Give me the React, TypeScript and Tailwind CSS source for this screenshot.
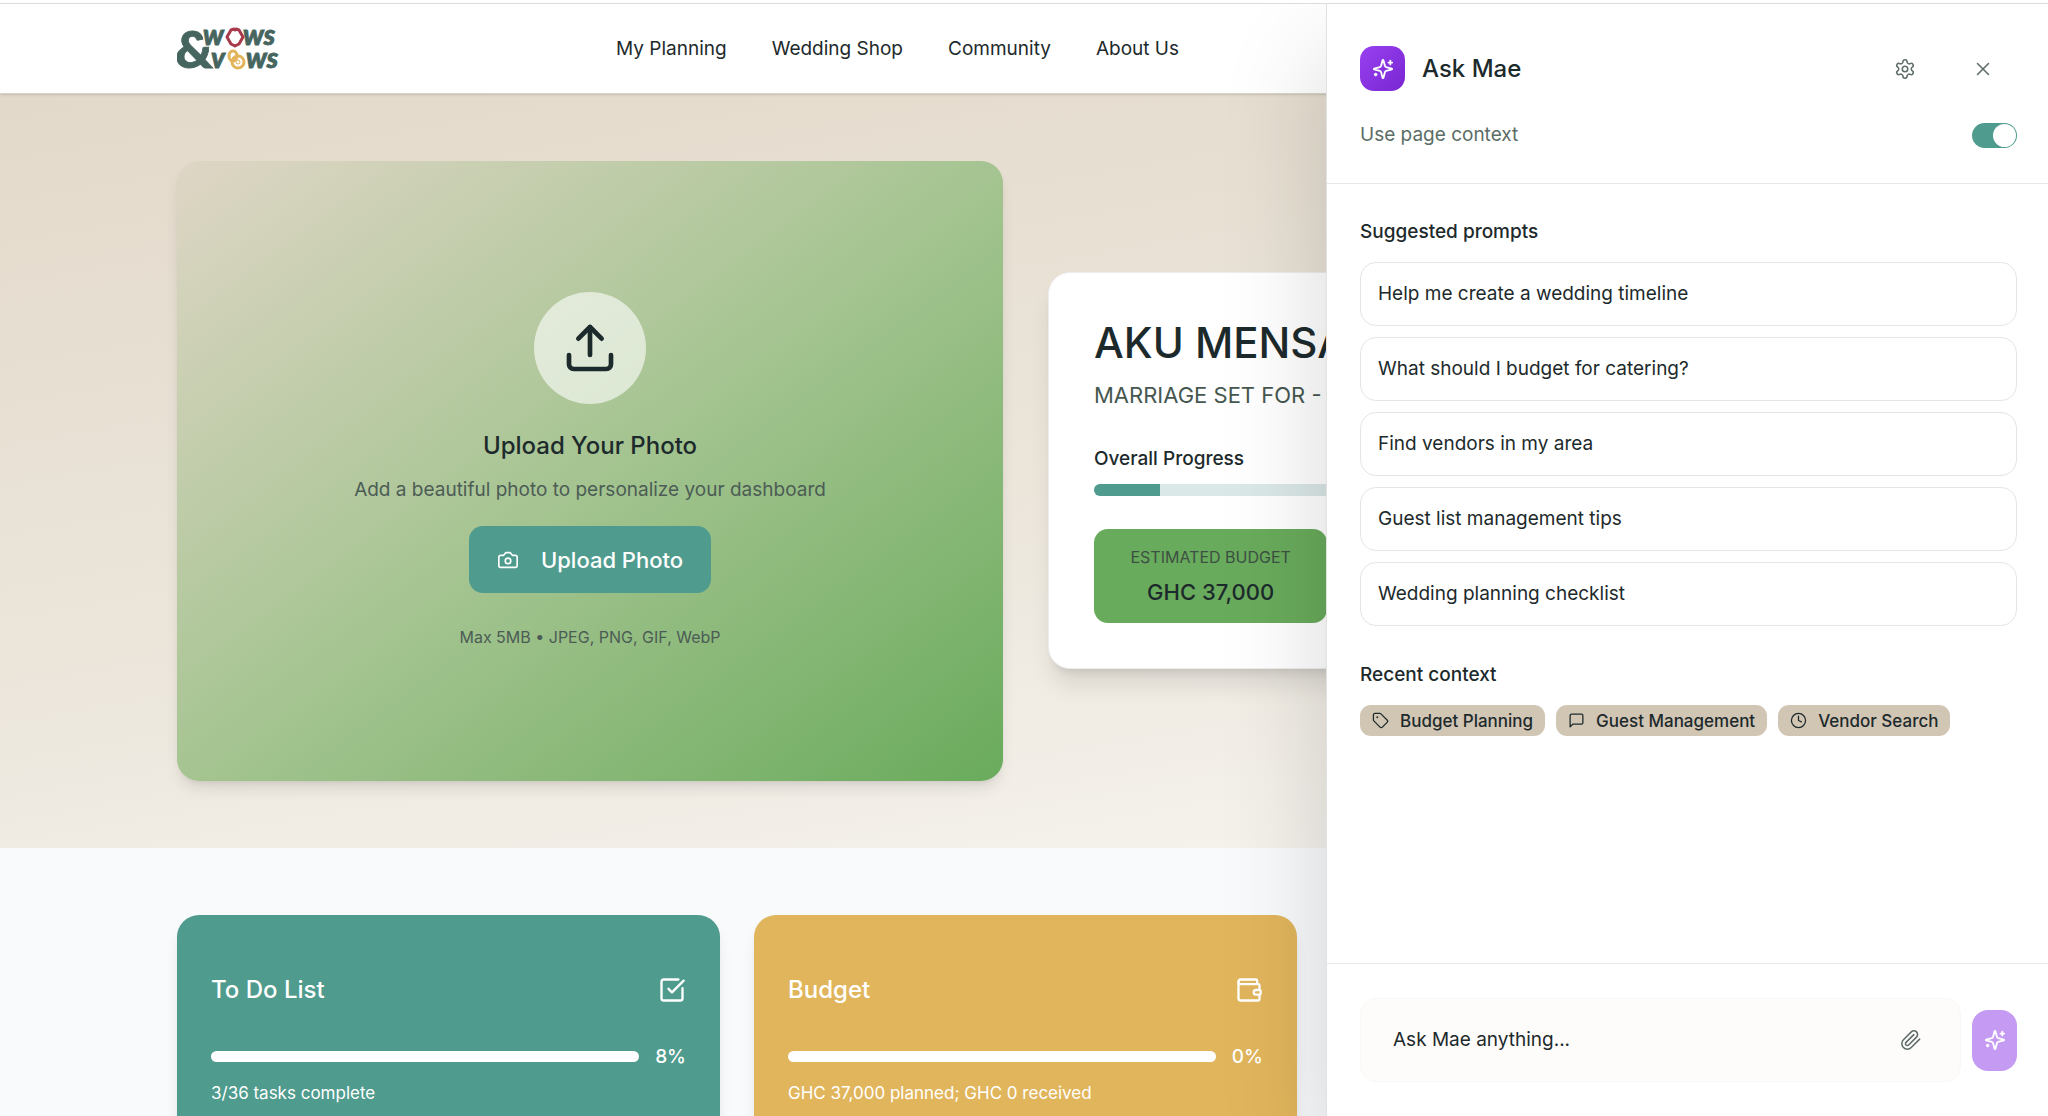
import React, { useState } from 'react';
import { Clock, Tag, Upload, Wallet, X } from 'lucide-react';

const navLinks = ['My Planning', 'Wedding Shop', 'Community', 'About Us'];

const prompts = [
  'Help me create a wedding timeline',
  'What should I budget for catering?',
  'Find vendors in my area',
  'Guest list management tips',
  'Wedding planning checklist',
];

interface IconProps {
  size: number;
  strokeWidth?: number;
}

function Icon({ size, strokeWidth = 2, children }: IconProps & { children: React.ReactNode }) {
  return (
    <svg
      width={size}
      height={size}
      viewBox="0 0 24 24"
      fill="none"
      stroke="currentColor"
      strokeWidth={strokeWidth}
      strokeLinecap="round"
      strokeLinejoin="round"
      aria-hidden="true"
    >
      {children}
    </svg>
  );
}

function SparklesIcon(props: IconProps) {
  return (
    <Icon {...props}>
      <path d="M9.937 15.5A2 2 0 0 0 8.5 14.063l-6.135-1.582a.5.5 0 0 1 0-.962L8.5 9.936A2 2 0 0 0 9.937 8.5l1.582-6.135a.5.5 0 0 1 .963 0L14.063 8.5A2 2 0 0 0 15.5 9.937l6.135 1.581a.5.5 0 0 1 0 .964L15.5 14.063a2 2 0 0 0-1.437 1.437l-1.582 6.135a.5.5 0 0 1-.963 0z" />
      <path d="M20 3v4" />
      <path d="M22 5h-4" />
      <path d="M4 17v2" />
      <path d="M5 18H3" />
    </Icon>
  );
}

function SettingsIcon(props: IconProps) {
  return (
    <Icon {...props}>
      <path d="M12.22 2h-.44a2 2 0 0 0-2 2v.18a2 2 0 0 1-1 1.73l-.43.25a2 2 0 0 1-2 0l-.15-.08a2 2 0 0 0-2.73.73l-.22.38a2 2 0 0 0 .73 2.73l.15.1a2 2 0 0 1 1 1.72v.51a2 2 0 0 1-1 1.74l-.15.09a2 2 0 0 0-.73 2.73l.22.38a2 2 0 0 0 2.73.73l.15-.08a2 2 0 0 1 2 0l.43.25a2 2 0 0 1 1 1.73V20a2 2 0 0 0 2 2h.44a2 2 0 0 0 2-2v-.18a2 2 0 0 1 1-1.73l.43-.25a2 2 0 0 1 2 0l.15.08a2 2 0 0 0 2.73-.73l.22-.39a2 2 0 0 0-.73-2.73l-.15-.08a2 2 0 0 1-1-1.74v-.5a2 2 0 0 1 1-1.74l.15-.09a2 2 0 0 0 .73-2.73l-.22-.38a2 2 0 0 0-2.73-.73l-.15.08a2 2 0 0 1-2 0l-.43-.25a2 2 0 0 1-1-1.73V4a2 2 0 0 0-2-2z" />
      <circle cx="12" cy="12" r="3" />
    </Icon>
  );
}

function CameraIcon(props: IconProps) {
  return (
    <Icon {...props}>
      <path d="M14.5 4h-5L7 7H4a2 2 0 0 0-2 2v9a2 2 0 0 0 2 2h16a2 2 0 0 0 2-2V9a2 2 0 0 0-2-2h-3l-2.5-3z" />
      <circle cx="12" cy="13" r="3" />
    </Icon>
  );
}

function MessageIcon(props: IconProps) {
  return (
    <Icon {...props}>
      <path d="M21 15a2 2 0 0 1-2 2H7l-4 4V5a2 2 0 0 1 2-2h14a2 2 0 0 1 2 2z" />
    </Icon>
  );
}

function PaperclipIcon(props: IconProps) {
  return (
    <Icon {...props}>
      <path d="m21.44 11.05-9.19 9.19a6 6 0 0 1-8.49-8.49l8.57-8.57A4 4 0 1 1 18 8.84l-8.59 8.57a2 2 0 0 1-2.83-2.83l8.49-8.48" />
    </Icon>
  );
}

function TaskIcon(props: IconProps) {
  return (
    <Icon {...props}>
      <path d="M21 10.5V19a2 2 0 0 1-2 2H5a2 2 0 0 1-2-2V5a2 2 0 0 1 2-2h12.5" />
      <path d="m9 11 3 3L22 4" />
    </Icon>
  );
}

const recentContext = [
  { label: 'Budget Planning', icon: Tag },
  { label: 'Guest Management', icon: MessageIcon },
  { label: 'Vendor Search', icon: Clock },
];

function Logo() {
  return (
    <a href="#" aria-label="Wows & Vows" className="block">
      <svg
        width="108"
        height="76"
        viewBox="0 -14 108 76"
        fontFamily="Lato, sans-serif"
        fontWeight="900"
        fill="#46655f"
        stroke="#46655f"
        strokeWidth="0.8"
      >
        <text x="-2" y="43" fontSize="52">&amp;</text>
        <g fontStyle="italic" fontSize="28">
          <text x="26" y="20">w</text>
          <text x="66" y="20">ws</text>
          <text x="34" y="43">v</text>
          <text x="69" y="43">ws</text>
        </g>
        <path
          d="M50 12 54 5l3-1 1 1 1-1 3 1 4 7-4 7-4 2-4-2z"
          fill="none"
          stroke="#a83a4c"
          strokeWidth="3"
          strokeLinejoin="round"
        />
        <g fill="none" stroke="#e2b55c" strokeWidth="3">
          <ellipse cx="56" cy="31" rx="4" ry="5" />
          <circle cx="61" cy="37" r="6" />
          <circle cx="61" cy="37" r="2" strokeWidth="1" />
        </g>
      </svg>
    </a>
  );
}

interface StatCardProps {
  title: string;
  percent: string;
  caption: string;
  className: string;
  icon: React.ReactNode;
}

function StatCard({ title, percent, caption, className, icon }: StatCardProps) {
  return (
    <section className={`rounded-[22px] px-[34px] pt-14 pb-12 text-white shadow-lg ${className}`}>
      <div className="flex items-center justify-between mb-[34px]">
        <h3 className="text-[24px] leading-[38px] font-medium">{title}</h3>
        {icon}
      </div>
      <div className="flex items-center gap-4">
        <div className="h-[11px] flex-1 rounded-full bg-white" />
        <span className="text-[19px] leading-7 font-medium">{percent}</span>
      </div>
      <p className="mt-2 text-[17px] leading-7">{caption}</p>
    </section>
  );
}

function AskMaePanel() {
  const [useContext, setUseContext] = useState(true);
  const [message, setMessage] = useState('');

  return (
    <aside className="absolute inset-y-0 right-0 w-[722px] max-w-full flex flex-col bg-white border-l border-[#e2e3e1] shadow-[0_50px_100px_rgba(0,0,0,0.16)]">
      <div className="pl-[33px] pr-[31px] pt-[42px] pb-[34px] border-b border-[#e7e8e7]">
        <div className="flex items-center">
          <div className="size-[45px] rounded-[14px] flex items-center justify-center text-white bg-linear-to-br from-[#9940f0] to-[#7825d2]">
            <SparklesIcon size={22} />
          </div>
          <h2 className="ml-[17px] flex-1 text-[24px] leading-8 font-medium">Ask Mae</h2>
          <button type="button" aria-label="Settings" className="size-11 mr-[34px] flex items-center justify-center text-[#5f6e6b]">
            <SettingsIcon size={22} strokeWidth={1.7} />
          </button>
          <button type="button" aria-label="Close" className="size-11 mr-3 flex items-center justify-center text-[#5f6e6b]">
            <X size={22} strokeWidth={1.7} />
          </button>
        </div>
        <label className="mt-[30px] flex items-center justify-between text-[19px] leading-7 text-[#5b6d66]">
          Use page context
          <input
            type="checkbox"
            role="switch"
            checked={useContext}
            onChange={(e) => setUseContext(e.target.checked)}
            className="appearance-none flex items-center w-[45px] h-[25px] p-px rounded-full bg-[#cbd5d2] checked:bg-[#4f9b8e] before:size-[23px] before:rounded-full before:bg-white checked:before:ml-5"
          />
        </label>
      </div>

      <div className="flex-1 pl-[33px] pr-[31px] pt-[34px]">
        <h3 className="text-[19px] leading-7 font-medium">Suggested prompts</h3>
        <div className="mt-4 flex flex-col gap-[11px]">
          {prompts.map((prompt) => (
            <button
              key={prompt}
              type="button"
              className="h-16 px-[17px] text-left text-[19px] leading-7 rounded-2xl border border-[#e4e6e5]"
            >
              {prompt}
            </button>
          ))}
        </div>

        <h3 className="mt-[35px] text-[19px] leading-7 font-medium">Recent context</h3>
        <div className="mt-4 flex gap-[11px]">
          {recentContext.map(({ label, icon: ContextIcon }) => (
            <button
              key={label}
              type="button"
              className="h-[31px] px-3 flex items-center gap-[11px] rounded-[11px] bg-[#d1c5b4] text-[17px] leading-6 font-medium"
            >
              <ContextIcon size={17} strokeWidth={1.8} />
              {label}
            </button>
          ))}
        </div>
      </div>

      <form
        onSubmit={(e) => e.preventDefault()}
        className="pl-[33px] pr-[31px] py-[34px] flex items-center gap-[11px] border-t border-[#e7e8e7]"
      >
        <div className="flex-1 h-[84px] pl-8 pr-[34px] flex items-center rounded-2xl border border-[#faf8f4] bg-[#fdfcfa]">
          <input
            type="text"
            aria-label="Ask Mae anything"
            placeholder="Ask Mae anything..."
            value={message}
            onChange={(e) => setMessage(e.target.value)}
            className="flex-1 min-w-0 bg-transparent text-[19px] leading-7 outline-none placeholder:text-[#1d2a2c]"
          />
          <button type="button" aria-label="Attach file" className="p-1 text-[#5f6e6b]">
            <PaperclipIcon size={22} strokeWidth={1.7} />
          </button>
        </div>
        <button
          type="submit"
          aria-label="Send"
          className="w-[45px] h-[61px] rounded-2xl flex items-center justify-center text-white bg-[#c49af2]"
        >
          <SparklesIcon size={22} />
        </button>
      </form>
    </aside>
  );
}

export default function App() {
  return (
    <div className="h-screen flex flex-col overflow-hidden bg-white font-['Inter',sans-serif] text-[#1d2a2c]">
      <div className="h-1 shrink-0 border-b border-[#dcdcdc]" />
      <div className="relative flex-1 overflow-hidden bg-[#f9fafc]">
        <header className="relative h-[90px] pl-[177px] pr-[174px] flex items-center bg-white border-b border-[#d6d3c8] shadow-sm">
          <Logo />
          <nav className="ml-[331px] flex gap-[45px] text-[19px] leading-7">
            {navLinks.map((link) => (
              <a key={link} href="#" className="whitespace-nowrap">
                {link}
              </a>
            ))}
          </nav>
        </header>

        <section className="pl-[177px] pr-[174px] py-[67px] grid grid-cols-2 gap-[45px] items-center bg-linear-170 from-[#e3d9ca] via-[#ebe5da] to-[#f8f6f2]">
          <div className="aspect-4/3 flex flex-col items-center justify-center rounded-[22px] shadow-lg bg-linear-to-br from-[#dfd6c6] via-[#a5c491] to-[#69ab5c]">
            <div className="size-28 rounded-full flex items-center justify-center bg-white/60">
              <Upload size={56} />
            </div>
            <h2 className="mt-6 text-[24px] leading-9 font-medium">Upload Your Photo</h2>
            <p className="mt-3 text-[19px] leading-7 text-[#4c5c55]">
              Add a beautiful photo to personalize your dashboard
            </p>
            <button
              type="button"
              className="mt-[22px] h-[67px] px-7 flex items-center gap-[22px] rounded-[14px] bg-[#4f9b8e] text-white text-[22px] leading-8 font-medium"
            >
              <CameraIcon size={22} strokeWidth={1.8} />
              Upload Photo
            </button>
            <p className="mt-8 text-[16px] leading-6 text-[#4c5c55]">Max 5MB • JPEG, PNG, GIF, WebP</p>
          </div>

          <div className="p-[45px] rounded-[22px] bg-white border border-[#eceeed] shadow-xl">
            <h1 className="text-[42px] leading-[50px] font-medium">AKU MENSA</h1>
            <p className="mt-[11px] text-[22px] leading-8 text-[#46574f]">MARRIAGE SET FOR -</p>
            <p className="mt-[34px] text-[19px] leading-7 font-medium">Overall Progress</p>
            <div className="mt-[11px] h-3 rounded-full overflow-hidden bg-[#dbe8e8]">
              <div className="h-full w-[9%] bg-[#4f9b8e]" />
            </div>
            <div className="mt-[33px] grid grid-cols-3 gap-[17px]">
              <div className="py-3 flex flex-col items-center rounded-[14px] bg-[#69ab5c]">
                <span className="text-[16px] leading-8 text-[#3d5044]">ESTIMATED BUDGET</span>
                <span className="text-[22px] leading-[38px] font-medium">GHC 37,000</span>
              </div>
            </div>
          </div>
        </section>

        <section className="pl-[177px] pr-[174px] pt-[67px] grid grid-cols-3 gap-[34px]">
          <StatCard
            title="To Do List"
            percent="8%"
            caption="3/36 tasks complete"
            className="bg-[#4f9b8e]"
            icon={<TaskIcon size={28} />}
          />
          <StatCard
            title="Budget"
            percent="0%"
            caption="GHC 37,000 planned; GHC 0 received"
            className="bg-[#e1b55c]"
            icon={<Wallet size={28} />}
          />
        </section>

        <AskMaePanel />
      </div>
    </div>
  );
}
